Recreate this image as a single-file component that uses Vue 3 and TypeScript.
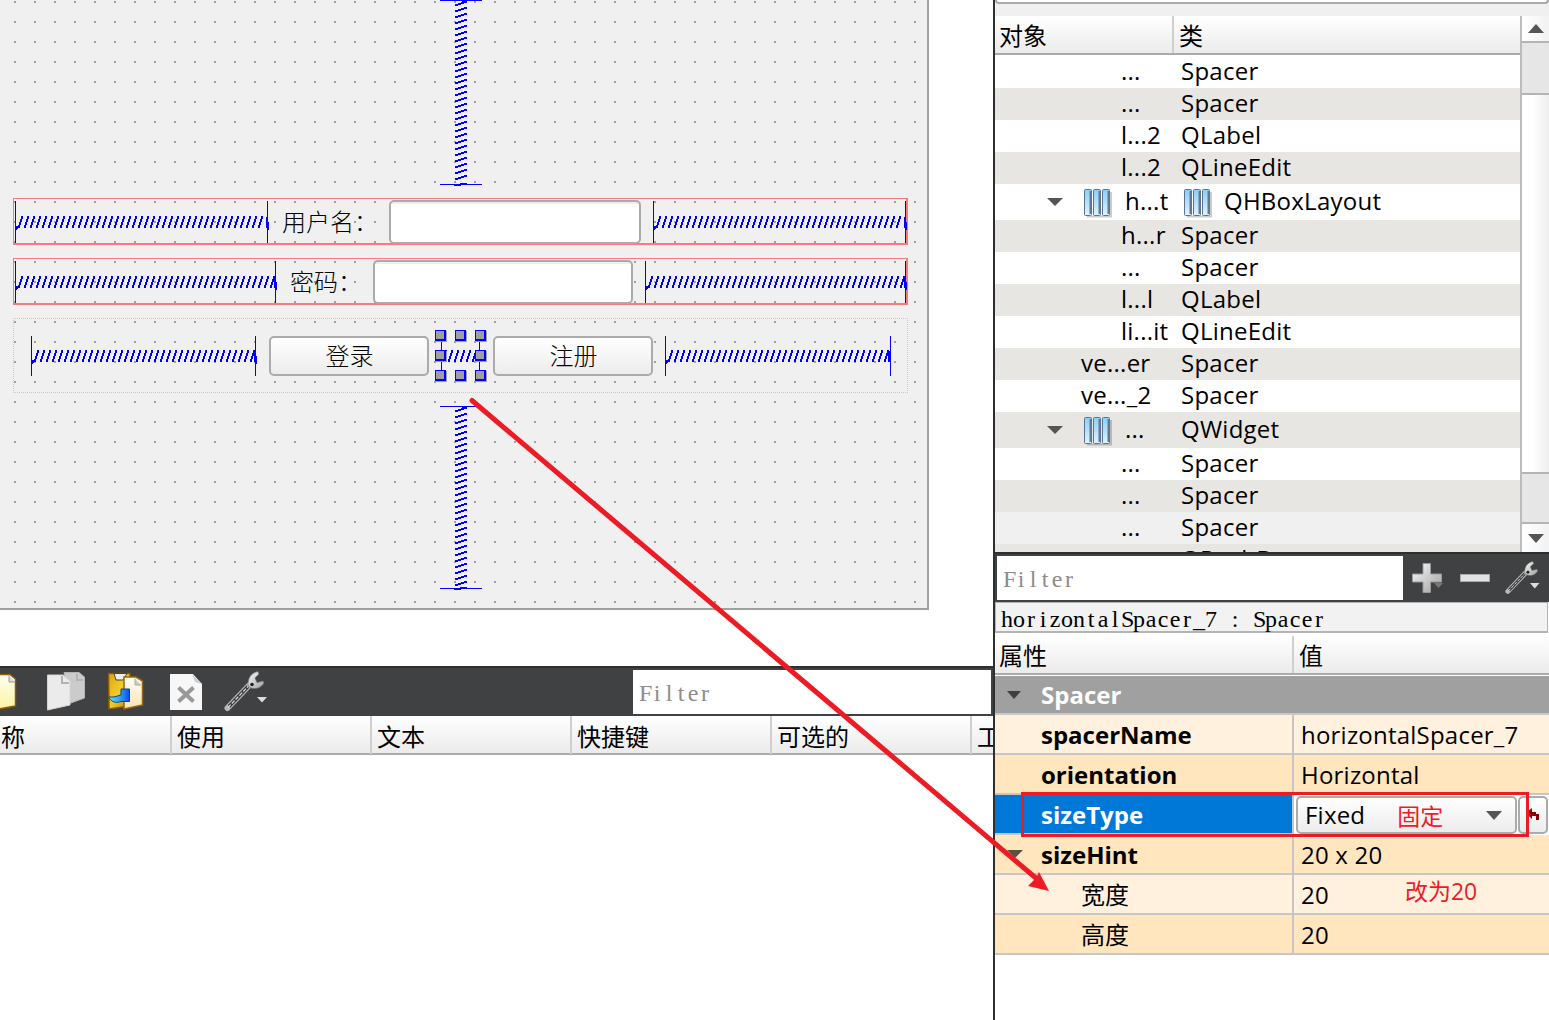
<script setup lang="ts">
interface TreeRow {
  name: string
  cls: string
  indent: number
  h: number
  shade: 'w' | 'g' | 'm'
  open?: boolean
  clsIcon?: boolean
}

const tree: TreeRow[] = [
  { name: '...', cls: 'Spacer', indent: 126, h: 32, shade: 'w' },
  { name: '...', cls: 'Spacer', indent: 126, h: 32, shade: 'g' },
  { name: 'l...2', cls: 'QLabel', indent: 126, h: 32, shade: 'w' },
  { name: 'l...2', cls: 'QLineEdit', indent: 126, h: 32, shade: 'g' },
  { name: 'h...t', cls: 'QHBoxLayout', indent: 51, h: 36, shade: 'w', open: true, clsIcon: true },
  { name: 'h...r', cls: 'Spacer', indent: 126, h: 32, shade: 'g' },
  { name: '...', cls: 'Spacer', indent: 126, h: 32, shade: 'w' },
  { name: 'l...l', cls: 'QLabel', indent: 126, h: 32, shade: 'g' },
  { name: 'li...it', cls: 'QLineEdit', indent: 126, h: 32, shade: 'w' },
  { name: 've...er', cls: 'Spacer', indent: 86, h: 32, shade: 'g' },
  { name: 've..._2', cls: 'Spacer', indent: 86, h: 32, shade: 'w' },
  { name: '...', cls: 'QWidget', indent: 51, h: 36, shade: 'g', open: true },
  { name: '...', cls: 'Spacer', indent: 126, h: 32, shade: 'w' },
  { name: '...', cls: 'Spacer', indent: 126, h: 32, shade: 'g' },
  { name: '...', cls: 'Spacer', indent: 126, h: 32, shade: 'm' },
  { name: '', cls: 'QPushButton', indent: 126, h: 32, shade: 'g' },
]

const columns = ['使用', '文本', '快捷键', '可选的']

// Resize grips around the selected spacer; the centre one does not exist.
const grips = [[0, 0], [20, 0], [40, 0], [0, 20], [40, 20], [0, 40], [20, 40], [40, 40]]

function slash(x: number, bottom: number): string {
  let d = ''
  for (let k = 0; k < 4; k++) d += `M${x + k} ${bottom - 3 * k - 3}h2v3h-2z`
  return d
}

function hSpring(w: number, h: number): string {
  const m = h / 2
  let d = `M1 ${m + 4}h2v3h-2zM0 ${m + 5}h2v3h-2z`
  for (let x = 3; x + 4 < w; x += 6) d += slash(x, m + 6)
  return d + `M${w - 2} ${m - 5}h2v11h-2zM${w} ${m}h1v8h-1z`
}

function vSpring(h: number): string {
  let d = 'M22 1h5v1h-5z'
  for (let y = 4; y < h - 2; y += 6) {
    for (let k = 0; k < 4; k++) d += `M${15 + 3 * k} ${y - k}h3v2h-3z`
  }
  return d + `M14 ${h - 1}h7v2h-7zM20 ${h - 2}h7v2h-7z`
}

const chars = (s: string): string[] => s.split('')
</script>

<template>
  <div class="screen">
    <svg width="0" height="0" class="defs">
      <defs>
        <linearGradient id="metal" x1="0" y1="0" x2="1" y2="1">
          <stop offset="0" stop-color="#fafafa" /><stop offset="1" stop-color="#a0a0a0" />
        </linearGradient>
        <linearGradient id="paper" x1="0" y1="0" x2="0" y2="1">
          <stop offset="0" stop-color="#fffef4" /><stop offset="1" stop-color="#fbf49a" />
        </linearGradient>
        <linearGradient id="cream" x1="0" y1="0" x2="0" y2="1">
          <stop offset="0" stop-color="#fffdf5" /><stop offset="1" stop-color="#f8e4b0" />
        </linearGradient>
        <linearGradient id="gold" x1="0" y1="0" x2="1" y2="1">
          <stop offset="0" stop-color="#d9a614" /><stop offset=".5" stop-color="#f2cd28" /><stop offset="1" stop-color="#b47c06" />
        </linearGradient>
        <linearGradient id="blue" x1="0" y1="0" x2="1" y2="0">
          <stop offset="0" stop-color="#6fe6f4" /><stop offset=".5" stop-color="#35a8f0" /><stop offset="1" stop-color="#0a4cf0" />
        </linearGradient>
        <linearGradient id="bar" x1="0" y1="0" x2="0" y2="1">
          <stop offset="0" stop-color="#86d0f8" /><stop offset="1" stop-color="#dff4ff" />
        </linearGradient>
        <symbol id="layout" viewBox="0 0 29 31">
          <path d="M4 28.500H28V4" fill="none" stroke="#000" stroke-width="2" opacity=".2" />
          <g stroke="#5f7391">
            <rect x="1.500" y="1.500" width="7" height="26" rx="1" fill="url(#bar)" />
            <rect x="10.500" y="1.500" width="7" height="26" rx="1" fill="url(#bar)" />
            <rect x="19.500" y="1.500" width="7" height="26" rx="1" fill="url(#bar)" />
          </g>
          <path d="M7.500 3V26M16.500 3V26M25.500 3V26" stroke="#62799a" stroke-width="2" />
        </symbol>
        <symbol id="wrench" viewBox="0 0 44 42">
          <path d="M3.500 38L25 15.500" stroke="#b8b8b8" stroke-width="6" stroke-linecap="round" />
          <path d="M5 36.500L24 16.500" stroke="#3a3a3a" stroke-width="3.400" />
          <path d="M4 37.500L24 16.500" stroke="#dedede" stroke-width="1.200" stroke-dasharray="4 1.500" />
          <path d="M24 15C24 8 27 3 34 1.500L35 4L31 8L33 12.500L39 11L40 13C37 18 32 19.500 27 18Z" fill="url(#metal)" stroke="#6e6e6e" stroke-width=".7" />
          <circle cx="28" cy="14.500" r="1.800" fill="#222" />
        </symbol>
      </defs>
    </svg>

    <main class="left">
      <div class="workspace">
        <section class="form">
          <svg class="vs" width="42" height="186">
            <path d="M0 .5H42M0 184.500H42" stroke="#00f" />
            <path :d="vSpring(185)" class="coil" />
          </svg>
          <div class="lay r1">
            <svg width="254" height="42"><path d="M.5 0V42M252.500 0V42" stroke="#00f" /><path :d="hSpring(253, 42)" class="coil" /></svg>
            <span class="lbl">用户名：</span>
            <div class="edit"></div>
            <svg width="254" height="42"><path d="M.5 0V42M252.500 0V42" stroke="#00f" /><path :d="hSpring(253, 42)" class="coil" /></svg>
          </div>
          <div class="lay r2">
            <svg width="262" height="42"><path d="M.5 0V42M260.500 0V42" stroke="#00f" /><path :d="hSpring(261, 42)" class="coil" /></svg>
            <span class="lbl">密码：</span>
            <div class="edit"></div>
            <svg width="262" height="42"><path d="M.5 0V42M260.500 0V42" stroke="#00f" /><path :d="hSpring(261, 42)" class="coil" /></svg>
          </div>
          <div class="lay3">
            <svg width="226" height="40"><path d="M.5 0V40M224.500 0V40" stroke="#00f" /><path :d="hSpring(225, 40)" class="coil" /></svg>
            <div class="btn">登录</div>
            <svg class="sel" width="53" height="53" viewBox="0 0 53 53">
              <path d="M6.500 7V46M44.500 7V46" stroke="#00f" />
              <path :d="[7, 13, 19, 25, 31, 37].map((x) => slash(x, 32)).join('')" class="coil" />
              <g v-for="[x, y] in grips" :key="`${x}-${y}`">
                <rect :x="x + 1" :y="y + 1" width="11" height="11" fill="#a0a0a0" />
                <rect :x="x" :y="y" width="11" height="11" fill="#00f" />
                <rect :x="x + 1" :y="y + 1" width="8" height="8" fill="#a0a0a0" />
              </g>
            </svg>
            <div class="btn">注册</div>
            <svg width="226" height="40"><path d="M.5 0V40M225.500 0V40" stroke="#00f" /><path :d="hSpring(225, 40)" class="coil" /></svg>
          </div>
          <svg class="vs v2" width="42" height="184">
            <path d="M0 .5H42M0 182.500H42" stroke="#00f" />
            <path :d="vSpring(183)" class="coil" />
          </svg>
        </section>
      </div>

      <div class="toolbar">
        <svg class="icons" width="280" height="48" viewBox="0 668 280 48">
          <path d="M-6 674.500H10L15.500 679V706L-6 710Z" fill="url(#paper)" stroke="#8a5a08" stroke-width="1.500" />
          <path d="M9 675.500V682H15" fill="#ddd" stroke="#999" />
          <path d="M64 672.500H79L84.500 677V698L68 704Z" fill="#cbcbcb" stroke="#b4b4b4" />
          <path d="M47.500 675H63L70 681V705L47.500 710Z" fill="#ebebeb" stroke="#d4d4d4" />
          <path d="M62 676V683H69M77 674V680H83" fill="none" stroke="#b4b4b4" stroke-width="2" />
          <path d="M108.500 673.500H130V706L109 709Z" fill="url(#gold)" stroke="#8a5b04" stroke-width="1.500" />
          <path d="M114 673.500H127L123 680H116Z" fill="#eee" stroke="#554317" />
          <path d="M124 677H136L142.500 681V705L124 709Z" fill="url(#cream)" stroke="#986510" stroke-width="1.500" />
          <path d="M135 678.500V685H141" fill="#ccc" stroke="#aaa" />
          <path d="M108.500 697H114L121 695V689H129.500V701.500H121C117 703 112 703 108.500 697Z" fill="url(#blue)" stroke="#0c429b" />
          <path d="M170 674H193L202 684V710H170Z" fill="#f7f7f7" />
          <path d="M192 674L195 682L202 684Z" fill="#cecece" />
          <path d="M178.500 687.500L193.500 701.500M193.500 687.500L178.500 701.500" stroke="#999" stroke-width="4" />
          <use href="#wrench" x="224" y="670" width="44" height="42" />
          <path d="M257 697H267L262 702.500Z" fill="#ddd" />
        </svg>
        <div class="filter"><span class="mono"><i v-for="(c, i) in chars('Filter')" :key="i">{{ c }}</i></span></div>
      </div>
      <div class="thead">
        <div class="th first">称</div>
        <div v-for="c in columns" :key="c" class="th">{{ c }}</div>
        <div class="th last">工</div>
      </div>
    </main>

    <aside class="right">
      <div class="topgap"><div class="topbox"></div></div>
      <div class="inspector">
        <div class="view">
          <div class="head2"><div class="h-a">对象</div><div class="h-b">类</div></div>
          <div v-for="(r, i) in tree" :key="i" class="row" :class="r.shade" :style="{ height: r.h + 'px' }">
            <div class="c1" :style="{ paddingLeft: r.indent + 'px' }">
              <template v-if="r.open">
                <svg class="tri" width="18" height="10"><path d="M1 1H17L9 9Z" fill="#555" /></svg>
                <svg class="li" width="29" height="31"><use href="#layout" /></svg>
              </template>
              <span class="tx">{{ r.name }}</span>
            </div>
            <div class="c2">
              <svg v-if="r.clsIcon" class="li2" width="29" height="31"><use href="#layout" /></svg>
              <span class="tx">{{ r.cls }}</span>
            </div>
          </div>
        </div>
        <div class="scroll">
          <div class="sb up"><svg width="16" height="9"><path d="M0 9H16L8 0Z" fill="#555" /></svg></div>
          <div class="thumb"></div>
          <div class="track"></div>
          <div class="page"></div>
          <div class="sb"><svg width="16" height="9"><path d="M0 0H16L8 9Z" fill="#555" /></svg></div>
        </div>
      </div>
      <div class="bar2">
        <div class="filter f2"><span class="mono"><i v-for="(c, i) in chars('Filter')" :key="i">{{ c }}</i></span></div>
        <svg width="146" height="48" viewBox="1403 554 146 48">
          <path d="M1423 563.500H1430.500V574H1441.500V582H1430.500V592.500H1423V582H1412.500V574H1423Z" fill="url(#metal)" stroke="#999" />
          <path d="M1434 583H1443L1438.500 588Z" fill="#777" />
          <rect x="1460.500" y="574.500" width="29" height="7" fill="#e2e2e2" stroke="#aaa" />
          <use href="#wrench" x="1505" y="560" width="36" height="35" />
          <path d="M1530 583H1539.500L1534.750 588.500Z" fill="#ddd" />
        </svg>
      </div>
      <div class="objname"><span class="mono dark"><i v-for="(c, i) in chars('horizontalSpacer_7 : Spacer')" :key="i">{{ c }}</i></span></div>
      <div class="phead"><div class="p-a">属性</div><div class="p-b">值</div></div>
      <div class="group"><svg width="14" height="8"><path d="M0 0H14L7 8Z" fill="#404040" /></svg><b>Spacer</b></div>
      <div class="prop a"><div class="k"><b>spacerName</b></div><div class="v">horizontalSpacer_7</div></div>
      <div class="prop b"><div class="k"><b>orientation</b></div><div class="v">Horizontal</div></div>
      <div class="prop s">
        <div class="k"><b>sizeType</b></div>
        <div class="v ed">
          <div class="combo"><span>Fixed</span><em>固定</em><svg width="16" height="9"><path d="M0 0H16L8 9Z" fill="#555" /></svg></div>
          <div class="reset"><svg width="15" height="14" viewBox="0 0 15 14"><path d="M0 5L6 0V4H10V6H13V12H10V8H6V11Z" fill="#8b0000" /></svg></div>
        </div>
      </div>
      <div class="prop b"><div class="k"><svg class="pt" width="16" height="8"><path d="M0 0H16L8 8Z" fill="#5c503e" /></svg><b>sizeHint</b></div><div class="v">20 x 20</div></div>
      <div class="prop a"><div class="k sub">宽度</div><div class="v">20<em class="note">改为20</em></div></div>
      <div class="prop b"><div class="k sub">高度</div><div class="v">20</div></div>
    </aside>

    <svg class="overlay" width="1549" height="1020">
      <path d="M472 400.500L1037 879" stroke="#ed1c24" stroke-width="5" stroke-linecap="round" />
      <path d="M1049 891L1039 872L1036 878L1028 886Z" fill="#ed1c24" />
      <rect x="1022.500" y="793.500" width="505" height="42" fill="none" stroke="#ed1c24" stroke-width="3" />
    </svg>
  </div>
</template>

<style>
body { margin: 0; background: #fff; }
</style>

<style scoped>
.screen { position: relative; display: flex; width: 1549px; height: 1020px; overflow: hidden; background: #fff; color: #000; font: 24px/32px "Open Sans", "Noto Sans CJK SC", sans-serif; }
.screen * { box-sizing: border-box; }
.screen svg { display: block; flex: none; }
.defs, .overlay { position: absolute; left: 0; top: 0; pointer-events: none; }
.left { width: 993px; flex: none; overflow: hidden; }
.workspace { height: 666px; }
.form {
  width: 929px; height: 610px; padding-left: 13px;
  border: solid #a0a0a0; border-width: 0 2px 2px 0;
  background:
    linear-gradient(90deg, transparent 2px, #f0f0f0 2px) 14px 1px / 20px 20px,
    linear-gradient(#a0a0a0 2px, #f0f0f0 2px) 14px 1px / 20px 20px;
}
.vs { margin-left: 427px; }
.coil { fill: #00f; shape-rendering: crispEdges; }
.lay { display: flex; width: 895px; height: 47px; border: solid #f47c7c; border-width: 1px 2px 2px 1px; padding: 2px 0 0 1px; font-family: "Noto Sans CJK SC", sans-serif; font-weight: 300; }
.lay svg { position: relative; overflow: visible; }
.r1 { margin-top: 12px; }
.r2 { margin-top: 13px; }
.lbl { flex: none; line-height: 39px; margin-left: 13px; width: 107px; white-space: nowrap; }
.r2 .lbl { width: 83px; }
.edit { flex: none; width: 252px; height: 44px; margin-top: -1px; border: 2px solid #ababab; border-radius: 5px; background: linear-gradient(#eee 0 2px, #fff 2px); }
.r2 .edit { width: 260px; }
.edit + svg { margin-left: 12px; }
.lay3 { display: flex; width: 895px; height: 75px; margin-top: 13px; border: 1px dotted #c8c8c8; padding: 17px 0 0 17px; font-family: "Noto Sans CJK SC", sans-serif; font-weight: 300; }
.btn { flex: none; width: 160px; height: 40px; margin-left: 12px; border: 2px solid #ababab; border-radius: 5px; background: linear-gradient(#fff, #ececec); text-align: center; line-height: 34px; padding-left: 1px; }
.lay3 .sel { margin: -6px -7px 0 6px; }
.btn + svg:last-child { margin-left: 12px; }
.v2 { margin-top: 13px; }
.toolbar { display: flex; justify-content: space-between; height: 50px; background: #404142; border-top: 2px solid #2e2f30; padding-right: 2px; }
.filter { width: 358px; height: 44px; margin-top: 2px; background: #fff; padding-left: 6px; color: #8c8c8c; }
.mono { display: flex; font: 24px/46px "Liberation Serif", serif; }
.mono i { width: 12px; flex: none; font-style: normal; text-align: center; white-space: pre; }
.thead { display: flex; height: 39px; background: linear-gradient(#fff, #ebebeb); border-bottom: 2px solid #ababab; line-height: 41px; }
.th { width: 200px; flex: none; height: 38px; border-right: 2px solid #cfcfcf; padding-left: 5px; }
.th.first { width: 172px; padding-left: 1px; }
.th.last { border: 0; width: 21px; overflow: hidden; }
.right { width: 556px; flex: none; border-left: 2px solid #2e2f30; height: 1020px; }
.topgap { height: 16px; background: #f0f0f0; }
.topbox { height: 4px; border: solid #ababab; border-width: 0 2px 2px; border-radius: 0 0 5px 5px; background: #fff; }
.inspector { display: flex; height: 536px; }
.view { width: 526px; overflow: hidden; flex: none; }
.head2, .phead { display: flex; background: linear-gradient(#fff, #ebebeb); border-bottom: 2px solid #ababab; }
.head2 { height: 39px; margin-bottom: 1px; line-height: 39px; }
.h-a { width: 179px; padding-left: 4px; border-right: 2px solid #cfcfcf; }
.h-b { padding-left: 5px; }
.row { display: flex; line-height: 32px; }
.w { background: #fff; } .g { background: #e8e6e2; } .m { background: #f0f0f0; }
.c1, .c2 { display: flex; align-items: center; white-space: pre; }
.tx { margin-bottom: 2px; letter-spacing: .25px; }
.c1 { width: 186px; flex: none; }
.c2 { width: 330px; }
.tri { margin-right: 19px; }
.li { margin-right: 13px; margin-top: 2px; }
.li2 { margin: 2px 12px 0 2px; }
.scroll { width: 28px; margin-left: -1px; flex: 1; position: relative; display: flex; flex-direction: column; border-left: 2px solid #bcbcbc; background: linear-gradient(90deg, #fff 40%, #eee); }
.sb { height: 28px; display: flex; align-items: center; justify-content: center; background: linear-gradient(90deg, #fff, #f2f2f2); }
.sb.up { height: 27px; border-bottom: 2px solid #b4b4b4; }
.thumb { height: 52px; background: #e6e6e6; border-bottom: 2px solid #b4b4b4; }
.track { flex: 1; }
.page { height: 52px; background: #e6e6e6; border: solid #b4b4b4; border-width: 2px 0; }
.bar2 { display: flex; height: 50px; background: #404142; border-top: 2px solid #2e2f30; padding-left: 2px; }
.f2 { width: 406px; }
.objname { height: 31px; margin-right: 1px; border: 1px solid #b4b4b4; border-bottom-width: 2px; background: #f2f2f2; padding-left: 5px; }
.objname .mono { line-height: 32px; }
.phead { height: 39px; margin-top: 3px; margin-bottom: 1px; line-height: 39px; }
.p-a { width: 299px; padding-left: 4px; border-right: 2px solid #cfcfcf; }
.p-b { padding-left: 5px; }
.group { height: 39px; display: flex; align-items: center; background: #a0a0a0; border-bottom: 2px solid #c8c8c8; color: #fff; padding-left: 12px; }
.group b { margin-left: 20px; }
.prop { display: flex; height: 40px; line-height: 39px; }
.k { width: 299px; padding-left: 46px; border: solid #c6c6c6; border-width: 0 2px 2px 0; display: flex; align-items: center; }
.v { flex: 1; display: flex; border-bottom: 2px solid #c6c6c6; padding-left: 7px; white-space: nowrap; letter-spacing: .22px; }
.a { background: #fff1de; } .b { background: #ffe6be; } .s { background: #fff; }
.s .k { background: #0078d7; color: #fff; }
.ed { padding: 1px 1px 0 2px; border-bottom: 0; }
.combo, .reset { height: 38px; border: 2px solid #ababab; border-radius: 5px; background: linear-gradient(#fff, #ececec); display: flex; align-items: center; }
.combo { width: 221px; padding: 0 13px 0 7px; line-height: 34px; }
.combo em { margin: 2px auto 0 32px; }
.reset { width: 30px; margin-left: 1px; justify-content: center; }
em { font-style: normal; color: #ed1c24; font-size: 23px; letter-spacing: 0; }
.note { margin-left: 76px; line-height: 32px; }
.pt { margin: 0 18px 0 -34px; }
.k.sub { padding-left: 86px; }
</style>
